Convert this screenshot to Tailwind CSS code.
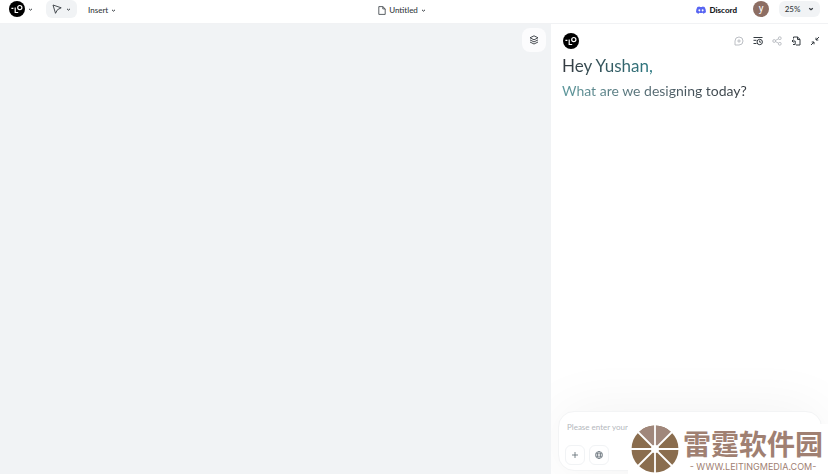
<!DOCTYPE html>
<html lang="en">
<head>
    <meta charset="UTF-8">
    <meta name="viewport" content="width=device-width, initial-scale=1.0">
    <title>Untitled</title>
    <script src="https://cdn.jsdelivr.net/npm/@tailwindcss/browser@4"></script>
</head>
<body class="flex h-screen flex-col overflow-hidden bg-white font-['Lato','Noto_Sans_CJK_SC',sans-serif] text-[#343a40]">
    <!-- shared symbols -->
    <svg class="hidden">
        <symbol id="logo" viewBox="0 0 16 16">
            <circle cx="8" cy="8" r="8" fill="#000"/>
            <path d="M2.4 7.4h2M6.2 6.5v5h3" fill="none" stroke="#fff" stroke-width="1.2"/>
            <circle cx="10.8" cy="6.6" r="2.1" fill="none" stroke="#fff" stroke-width="1.2"/>
        </symbol>
        <symbol id="chevron" viewBox="0 0 6 6">
            <path d="M1.200 2.200l1.800 1.600 1.800-1.600" fill="none" stroke="currentColor" stroke-width="1.200"/>
        </symbol>
    </svg>

    <header class="flex h-6 shrink-0 items-start border-b border-[#f1f2f4] px-2">
        <div class="flex flex-1 items-start">
            <button aria-label="Main menu" class="flex h-[18px] items-center gap-[3px] pl-px">
                <svg class="size-4"><use href="#logo"/></svg>
                <svg class="size-[5px]"><use href="#chevron"/></svg>
            </button>
            <button aria-label="Select tool" class="ml-[13px] flex h-[18px] w-[31px] items-center justify-center gap-1 rounded-md bg-[#f1f3f5]">
                <svg class="size-[10px]" viewBox="0 0 10 10" fill="none" stroke="currentColor" stroke-width="0.9" stroke-linejoin="round"><path d="M1 1l8.200 2.800-3.700 1.900-2 3.600z"/></svg>
                <svg class="size-[5px]"><use href="#chevron"/></svg>
            </button>
            <button class="ml-[11px] flex h-5 items-center gap-[3px] text-[8px] font-medium">Insert <svg class="size-[5px]"><use href="#chevron"/></svg></button>
        </div>
        <button class="mr-6 flex h-5 items-center gap-[3px] text-[8px] font-medium">
            <svg class="h-[9px] w-2" viewBox="0 0 8 9" fill="none" stroke="currentColor" stroke-width="0.8" stroke-linejoin="round"><path d="M.8.6h4l2.4 2.3v5.5H.8zM4.8.6v2.3h2.4"/></svg>
            Untitled
            <svg class="size-[5px]"><use href="#chevron"/></svg>
        </button>
        <div class="flex flex-1 items-start justify-end">
            <a href="#" class="flex h-5 items-center gap-[3px] text-[8px] font-black text-[#16191d]">
                <svg class="h-2 w-[10px]" viewBox="0 0 20 16"><path fill="#5865f2" fill-rule="evenodd" d="M7 .8C5.300 1 4 1.500 2.800 2.200.8 5.500-.1 9 .1 12.700 1.800 14.200 3.500 15 5.200 15.500l1.300-2.200c2.300.7 4.700.7 7 0l1.300 2.200c1.800-.5 3.500-1.400 5.100-2.800.2-3.700-.8-7.200-2.800-10.500C15.900 1.500 14.600 1 13 .8l-.7 1.400a16 16 0 0 0-4.600 0zM6.700 6.600a1.900 2.100 0 1 1 0 4.200 1.900 2.100 0 0 1 0-4.200zM13.300 6.600a1.900 2.100 0 1 1 0 4.200 1.900 2.100 0 0 1 0-4.200z"/></svg>
                Discord
            </a>
            <button aria-label="Account" class="mt-px ml-4 flex size-4 items-center justify-center rounded-full bg-[#8d6e63] font-['Roboto',sans-serif] text-[10px] leading-none text-white">y</button>
            <button class="mt-px ml-[10px] flex h-4 w-[41px] items-center justify-center gap-2 rounded-md bg-[#f1f3f5] text-[8px] font-medium">25% <svg class="size-[6px]"><use href="#chevron"/></svg></button>
        </div>
    </header>

    <div class="flex min-h-0 flex-1">
        <main class="flex flex-1 items-start justify-end bg-[#f1f3f5] p-1">
            <button aria-label="Layers" class="flex size-6 items-center justify-center rounded-lg bg-[#fcfcfd]">
                <svg class="size-[10px]" viewBox="0 0 10 10" fill="none" stroke="currentColor" stroke-width="0.9" stroke-linejoin="round"><path d="M5 .8l4 2-4 2-4-2zM1 4.900l4 2 4-2M1 7l4 2 4-2"/></svg>
            </button>
        </main>

        <aside class="flex w-[278px] shrink-0 flex-col overflow-hidden border-l border-[#f1f3f5] pt-[9px] pr-[6px] pb-[3px] pl-[7px]">
            <div class="flex items-center justify-between pr-[2px] pl-[5px]">
                <svg class="size-4"><use href="#logo"/></svg>
                <div class="flex gap-[9px]">
                    <button aria-label="New chat" class="text-[#b4b8bd]">
                        <svg class="size-[10px]" viewBox="0 0 10 10" fill="none" stroke="currentColor" stroke-width="0.9"><path d="M1 9V5a4 4 0 1 1 4 4zM5 3.200v3.600M3.200 5h3.600"/></svg>
                    </button>
                    <button aria-label="History">
                        <svg class="size-[10px]" viewBox="0 0 10 10" fill="none" stroke="currentColor" stroke-width="1"><path d="M.5 1.500h9M.5 4.300h3M.5 7.500h3"/><circle cx="6.700" cy="6" r="2.700"/><path d="M6.700 4.500V6.200h1.200"/></svg>
                    </button>
                    <button aria-label="Share" class="text-[#b4b8bd]">
                        <svg class="size-[10px]" viewBox="0 0 10 10" fill="none" stroke="currentColor" stroke-width="0.9"><circle cx="2.200" cy="5" r="1.400"/><circle cx="7.800" cy="2.200" r="1.400"/><circle cx="7.800" cy="7.800" r="1.400"/><path d="M3.500 4.400l3-1.600M3.500 5.600l3 1.600"/></svg>
                    </button>
                    <button aria-label="Files">
                        <svg class="size-[10px]" viewBox="0 0 10 10" fill="none" stroke="currentColor" stroke-width="1" stroke-linejoin="round"><path d="M2.500 2.500V1h4L9 3.300V9H5M6.500 1v2.500H9M2.500 3.500L1 5l1.500 1.500M1 5h3.200v3.500H2"/></svg>
                    </button>
                    <button aria-label="Collapse">
                        <svg class="size-[10px]" viewBox="0 0 10 10" fill="none" stroke="currentColor" stroke-width="1"><path d="M9 1L6 4M6 1.700V4h2.300M1 9l3-3M4 8.300V6H1.700"/></svg>
                    </button>
                </div>
            </div>

            <h1 class="mt-[5px] ml-1 self-start bg-linear-to-r from-[#343a40] to-[#2b7a83] bg-clip-text text-[17px] leading-6 text-transparent">Hey Yushan,</h1>
            <p class="mt-[3px] ml-1 self-start bg-linear-to-r from-[#5d989c] via-[#546870] to-[#343a40] bg-clip-text text-[14px] leading-5 whitespace-nowrap text-transparent">What are we designing today?</p>

            <form class="mt-auto flex flex-col gap-3 rounded-2xl border border-[#f3f4f5] bg-white px-[6px] pt-[9px] pb-[5px] shadow-[0_0_60px_rgba(0,0,0,0.06)]">
                <input type="text" aria-label="Prompt" placeholder="Please enter your" class="h-3 w-full px-[2px] text-[8px] leading-3 outline-none placeholder:text-[#b4b8bd]">
                <div class="flex gap-1">
                    <button type="button" aria-label="Add file" class="flex size-5 items-center justify-center rounded-md border border-[#f1f3f5] text-[#5c6770]">
                        <svg class="size-2" viewBox="0 0 8 8" stroke="currentColor" stroke-width="0.800"><path d="M4 1v6M1 4h6"/></svg>
                    </button>
                    <button type="button" aria-label="Web search" class="flex size-5 items-center justify-center rounded-md border border-[#f1f3f5] text-[#5c6770]">
                        <svg class="size-2" viewBox="0 0 8 8" fill="none" stroke="currentColor" stroke-width="0.700"><circle cx="4" cy="4" r="3.500"/><ellipse cx="4" cy="4" rx="1.600" ry="3.500"/><path d="M.7 2.800h6.600M.7 5.200h6.600"/></svg>
                    </button>
                </div>
            </form>
        </aside>
    </div>

    <!-- site badge, pinned over the corner -->
    <div class="absolute right-0 bottom-0 flex h-[50px] w-[200px] items-center gap-1 bg-white pl-[3px] text-[#a08072]">
        <svg class="size-12 shrink-0" viewBox="-24 -24 48 48">
            <circle r="23.500" fill="#8a6d4e"/>
            <path d="M0 0L-16.600-16.600A23.500 23.500 0 0 1 16.600-16.600z" fill="#a0877b"/>
            <path d="M-24 0H24M0-24V24M-17-17L17 17M-17 17L17-17" stroke="#fff" stroke-width="1.800"/>
            <circle r="4" fill="#fff"/>
        </svg>
        <div class="flex flex-col items-center gap-[3px]">
            <span class="font-['Noto_Sans_CJK_SC',sans-serif] text-[28px] leading-8 font-bold whitespace-nowrap">雷霆软件园</span>
            <span class="font-['Inter',sans-serif] text-[9px] leading-[10px] whitespace-nowrap">- WWW.LEITINGMEDIA.COM-</span>
        </div>
    </div>
</body>
</html>
